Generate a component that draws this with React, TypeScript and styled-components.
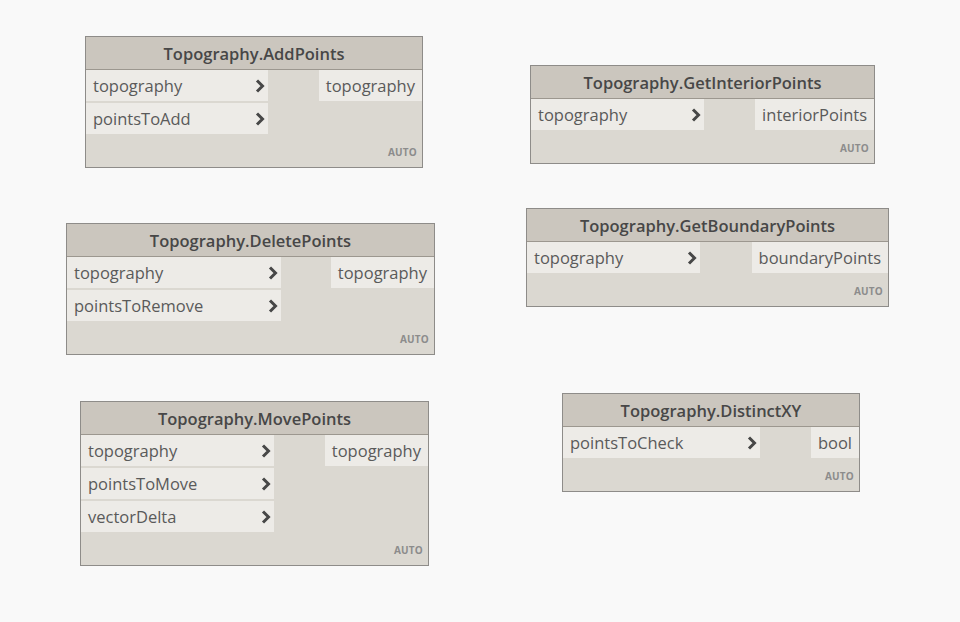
import React from "react";
import styled, { createGlobalStyle } from "styled-components";

const GlobalStyle = createGlobalStyle`
  html, body {
    margin: 0;
    padding: 0;
    background: #f9f9f9;
  }
  body {
    font-family: "Open Sans", "Liberation Sans", sans-serif;
  }
`;

type NodeData = {
  title: string;
  left: number;
  top: number;
  width: number;
  inWidth: number;
  inputs: string[];
  output: string;
};

const nodes: NodeData[] = [
  { title: "Topography.AddPoints", left: 85, top: 36, width: 338, inWidth: 182, inputs: ["topography", "pointsToAdd"], output: "topography" },
  { title: "Topography.GetInteriorPoints", left: 530, top: 65, width: 345, inWidth: 173, inputs: ["topography"], output: "interiorPoints" },
  { title: "Topography.DeletePoints", left: 66, top: 223, width: 369, inWidth: 214, inputs: ["topography", "pointsToRemove"], output: "topography" },
  { title: "Topography.GetBoundaryPoints", left: 526, top: 208, width: 363, inWidth: 173, inputs: ["topography"], output: "boundaryPoints" },
  { title: "Topography.MovePoints", left: 80, top: 401, width: 349, inWidth: 193, inputs: ["topography", "pointsToMove", "vectorDelta"], output: "topography" },
  { title: "Topography.DistinctXY", left: 562, top: 393, width: 298, inWidth: 197, inputs: ["pointsToCheck"], output: "bool" },
];

const Canvas = styled.div`
  position: relative;
  width: 960px;
  height: 622px;
  overflow: hidden;
  background: #f9f9f9;
`;

// nodes sit on a free canvas, so their place is the content itself
const Node = styled.div<{ $left: number; $top: number; $width: number }>`
  position: absolute;
  left: ${(p) => p.$left}px;
  top: ${(p) => p.$top}px;
  width: ${(p) => p.$width}px;
  box-sizing: border-box;
  border: 1px solid #8e8c89;
  background: #dbd8d1;
  display: flex;
  flex-direction: column;
`;

const Header = styled.div`
  height: 32px;
  border-bottom: 1px solid #9c978f;
  background: #cbc6be;
  display: flex;
  align-items: center;
  justify-content: center;
  font-size: 16.5px;
  font-weight: 600;
  color: #474747;
  white-space: nowrap;
`;

const Body = styled.div`
  display: flex;
  justify-content: space-between;
  align-items: flex-start;
`;

const Inputs = styled.div<{ $width: number }>`
  width: ${(p) => p.$width}px;
  display: flex;
  flex-direction: column;
  gap: 2px;
`;

const Port = styled.div`
  height: 31px;
  background: #edebe7;
  display: flex;
  align-items: center;
  font-size: 16.5px;
  color: #5a5a5a;
  white-space: nowrap;
`;

const InPort = styled(Port)`
  justify-content: space-between;
  padding: 0 2px 0 7px;
`;

const OutPort = styled(Port)`
  padding: 0 7px;
`;

const Footer = styled.div`
  height: 33px;
  display: flex;
  align-items: flex-end;
  justify-content: flex-end;
  padding: 0 5px 8px 0;
  box-sizing: border-box;
  font-size: 10px;
  font-weight: 700;
  color: #8c8c8c;
  letter-spacing: 0.2px;
`;

const Chevron = () => (
  <svg width="12" height="16" viewBox="0 0 12 16">
    <path d="M3 2.5 L8.5 8 L3 13.5" fill="none" stroke="#474747" strokeWidth="3" strokeLinejoin="miter" />
  </svg>
);

const App = () => (
  <Canvas>
    <GlobalStyle />
    {nodes.map((n) => (
      <Node key={n.title} $left={n.left} $top={n.top} $width={n.width}>
        <Header>{n.title}</Header>
        <Body>
          <Inputs $width={n.inWidth}>
            {n.inputs.map((name) => (
              <InPort key={name}>
                <span>{name}</span>
                <Chevron />
              </InPort>
            ))}
          </Inputs>
          <OutPort>{n.output}</OutPort>
        </Body>
        <Footer>AUTO</Footer>
      </Node>
    ))}
  </Canvas>
);

export default App;
